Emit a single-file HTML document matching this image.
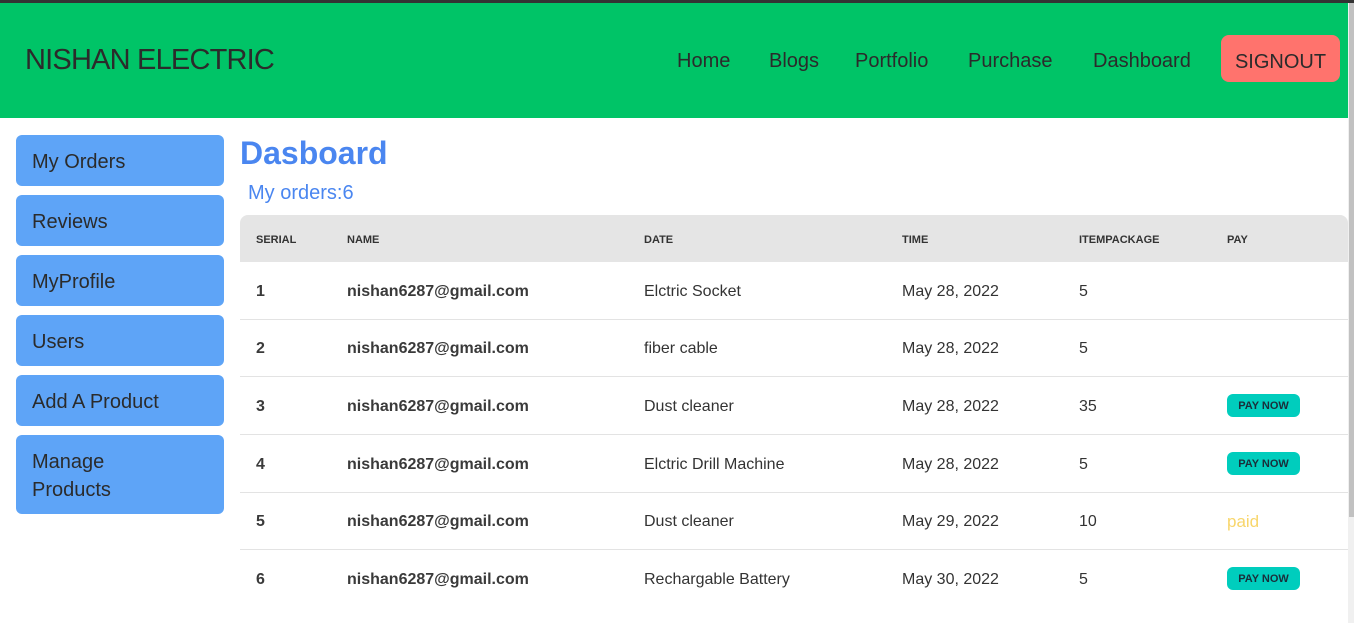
<!DOCTYPE html>
<html><head><style>
*{margin:0;padding:0;box-sizing:border-box}
body{width:1354px;height:623px;overflow:hidden;background:#fff;font-family:"Liberation Sans",sans-serif;color:#333;position:relative}
.top{position:absolute;left:0;top:0;width:1354px;height:3px;background:#333}
.hdr{position:absolute;left:0;top:3px;width:1348px;height:115px;background:#00c467}
.logo{position:absolute;left:25px;top:44px;font-size:29px;color:#2b2b2b;letter-spacing:-0.8px}
.nav{position:absolute;top:50px;font-size:20px;color:#2b2b2b}
.so{position:absolute;left:1221px;top:35px;width:119px;height:47px;background:#ff736d;border-radius:8px;font-size:20px;color:#2b2b2b;text-align:center;line-height:55px}
.sb{position:absolute;left:16px;width:208px;background:#5ea4f7;border-radius:6px;font-size:20px;color:#2b2b2b;padding-left:16px}
.t1{position:absolute;left:240px;top:135px;font-size:32px;font-weight:bold;color:#4a86f0}
.t2{position:absolute;left:248px;top:182px;font-size:20px;color:#4a86f0}
.th{position:absolute;left:240px;top:215px;width:1108px;height:47px;background:#e5e5e5;border-radius:8px 8px 0 0}
.c{position:absolute;font-size:11px;font-weight:bold;color:#333}
.r{position:absolute;left:240px;width:1108px;height:1px;background:#e3e3e3}
.d{position:absolute;font-size:16px;color:#333}
.b{font-weight:bold;color:#3a3a3a}
.pn{position:absolute;left:1227px;width:73px;height:23px;background:#00cdbd;border-radius:6px;font-size:11px;font-weight:bold;color:#1a2e3a;text-align:center;line-height:24px}
.sc{position:absolute;left:1348px;top:3px;width:6px;height:620px;background:#f0f0f0}
.st{position:absolute;left:1349px;top:3px;width:5px;height:514px;background:#c1c1c1}
</style></head><body>
<div class="top"></div>
<div class="hdr"></div>
<div class="logo">NISHAN ELECTRIC</div>
<div class="nav" style="left:677px">Home</div>
<div class="nav" style="left:769px">Blogs</div>
<div class="nav" style="left:855px">Portfolio</div>
<div class="nav" style="left:968px">Purchase</div>
<div class="nav" style="left:1093px">Dashboard</div>
<div class="so">SIGNOUT</div>
<div class="sc"></div><div class="st"></div>

<div class="sb" style="top:135px;height:51px;line-height:54px">My Orders</div>
<div class="sb" style="top:195px;height:51px;line-height:54px">Reviews</div>
<div class="sb" style="top:255px;height:51px;line-height:54px">MyProfile</div>
<div class="sb" style="top:315px;height:51px;line-height:54px">Users</div>
<div class="sb" style="top:375px;height:51px;line-height:54px">Add A Product</div>
<div class="sb" style="top:435px;height:79px;line-height:28px;padding-top:13px">Manage<br>Products</div>

<div class="t1">Dasboard</div>
<div class="t2">My orders:6</div>
<div class="th"></div>
<div class="c" style="left:256px;top:234px">SERIAL</div>
<div class="c" style="left:347px;top:234px">NAME</div>
<div class="c" style="left:644px;top:234px">DATE</div>
<div class="c" style="left:902px;top:234px">TIME</div>
<div class="c" style="left:1079px;top:234px">ITEMPACKAGE</div>
<div class="c" style="left:1227px;top:234px">PAY</div>

<div class="r" style="top:319px"></div>
<div class="r" style="top:376px"></div>
<div class="r" style="top:434px"></div>
<div class="r" style="top:492px"></div>
<div class="r" style="top:549px"></div>

<div class="d b" style="left:256px;top:283px">1</div><div class="d b" style="left:347px;top:283px">nishan6287@gmail.com</div><div class="d" style="left:644px;top:283px">Elctric Socket</div><div class="d" style="left:902px;top:283px">May 28, 2022</div><div class="d" style="left:1079px;top:283px">5</div>
<div class="d b" style="left:256px;top:340px">2</div><div class="d b" style="left:347px;top:340px">nishan6287@gmail.com</div><div class="d" style="left:644px;top:340px">fiber cable</div><div class="d" style="left:902px;top:340px">May 28, 2022</div><div class="d" style="left:1079px;top:340px">5</div>
<div class="d b" style="left:256px;top:398px">3</div><div class="d b" style="left:347px;top:398px">nishan6287@gmail.com</div><div class="d" style="left:644px;top:398px">Dust cleaner</div><div class="d" style="left:902px;top:398px">May 28, 2022</div><div class="d" style="left:1079px;top:398px">35</div><div class="pn" style="top:394px">PAY NOW</div>
<div class="d b" style="left:256px;top:456px">4</div><div class="d b" style="left:347px;top:456px">nishan6287@gmail.com</div><div class="d" style="left:644px;top:456px">Elctric Drill Machine</div><div class="d" style="left:902px;top:456px">May 28, 2022</div><div class="d" style="left:1079px;top:456px">5</div><div class="pn" style="top:452px">PAY NOW</div>
<div class="d b" style="left:256px;top:513px">5</div><div class="d b" style="left:347px;top:513px">nishan6287@gmail.com</div><div class="d" style="left:644px;top:513px">Dust cleaner</div><div class="d" style="left:902px;top:513px">May 29, 2022</div><div class="d" style="left:1079px;top:513px">10</div><div class="d" style="left:1227px;top:512px;color:#f8d66b;font-size:17px">paid</div>
<div class="d b" style="left:256px;top:571px">6</div><div class="d b" style="left:347px;top:571px">nishan6287@gmail.com</div><div class="d" style="left:644px;top:571px">Rechargable Battery</div><div class="d" style="left:902px;top:571px">May 30, 2022</div><div class="d" style="left:1079px;top:571px">5</div><div class="pn" style="top:567px">PAY NOW</div>
</body></html>
